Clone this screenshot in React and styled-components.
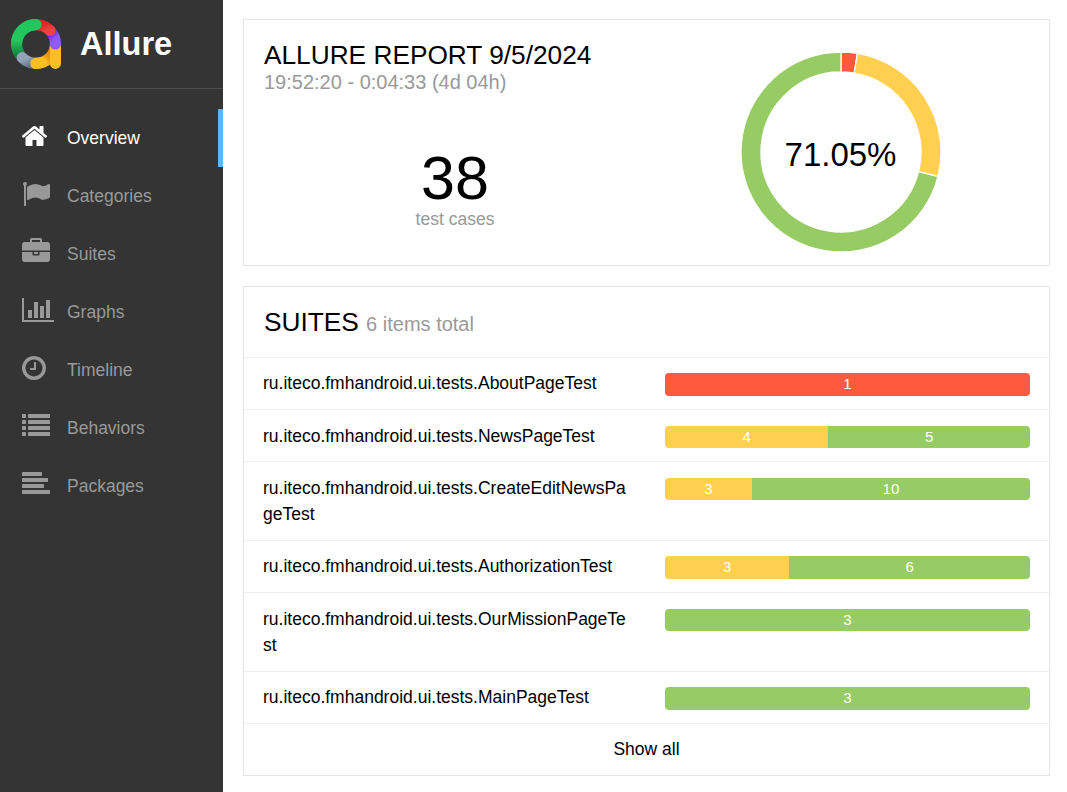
import React from "react";
import styled, { createGlobalStyle } from "styled-components";

const COLORS = { failed: "#fd5a3e", broken: "#ffd050", passed: "#97cc64" };

const GlobalStyle = createGlobalStyle`
  *, *::before, *::after { box-sizing: border-box; }
  body {
    margin: 0;
    background: #fff;
    color: #000;
    font-family: "Liberation Sans", Arial, sans-serif;
    font-size: 17.5px;
    line-height: 26.25px;
    overflow: hidden;
  }
`;

const Page = styled.div`
  display: flex;
  height: 100vh;
`;

const Sidebar = styled.aside`
  flex: 0 0 223px;
  background: #343434;
`;

const Brand = styled.div`
  display: flex;
  align-items: center;
  gap: 19px;
  height: 89px;
  padding-left: 11px;
  border-bottom: 1px solid #4d4d4d;
  color: #fff;
  font-size: 32.5px;
  font-weight: bold;
`;

const Menu = styled.nav`
  display: flex;
  flex-direction: column;
  padding-top: 20px;
`;

const MenuItem = styled.a`
  display: flex;
  align-items: flex-start;
  height: 58px;
  padding-left: 22px;
  color: ${(p) => (p.$active ? "#fff" : "#999")};
  border-right: 5px solid ${(p) => (p.$active ? "#63b3f7" : "transparent")};
`;

const MenuIcon = styled.svg`
  display: block;
  flex: none;
  width: 32px;
  height: 28px;
  margin: 13px 13px 0 0;
  fill: currentColor;
`;

const MenuLabel = styled.span`
  padding-top: 16px;
  font-size: 17.5px;
`;

const Main = styled.main`
  flex: 1;
  display: flex;
  flex-direction: column;
  gap: 20px;
  padding: 19px 17px 0 20px;
`;

const Panel = styled.section`
  border: 1px solid #e5e5e5;
`;

const Summary = styled(Panel)`
  display: flex;
  height: 247px;
`;

const SummaryInfo = styled.div`
  flex: 0 0 422px;
  padding: 21px 0 0 20px;
`;

const Title = styled.h2`
  margin: 0;
  font-size: 26.25px;
  line-height: 29px;
  font-weight: normal;
  text-transform: uppercase;
`;

const Subtitle = styled.span`
  color: #999;
  font-size: 20px;
  text-transform: none;
`;

const Period = styled(Subtitle)`
  display: block;
  line-height: 24px;
`;

const Total = styled.div`
  display: flex;
  flex-direction: column;
  align-items: center;
  width: 382px;
  padding-top: 53px;
`;

const TotalValue = styled.div`
  font-size: 61px;
  line-height: 63px;
`;

const TotalCaption = styled.div`
  color: #999;
  font-size: 17.5px;
  line-height: 18px;
`;

const ChartArea = styled.div`
  flex: 1;
  padding: 31.4px 0 0 74px;
`;

const Suites = styled(Panel)`
  height: 490px;
`;

const SuitesHeader = styled.div`
  height: 69.85px;
  padding: 21px 20px 0;
`;

const Row = styled.div`
  display: flex;
  padding: 12.5px 19px 12.5px 19px;
  border-top: 1px solid #eceeef;
`;

const SuiteName = styled.div`
  flex: 0 0 365px;
  margin-right: 37px;
  word-break: break-all;
`;

const Bar = styled.div`
  display: flex;
  flex: 1;
  height: 22.5px;
  margin-top: 3px;
  border-radius: 4px;
  overflow: hidden;
`;

const BarPart = styled.div`
  flex: ${(p) => p.$value} 1 auto;
  background: ${(p) => COLORS[p.$status]};
  color: #fff;
  font-size: 15px;
  line-height: 22px;
  text-align: center;
`;

const ShowAll = styled(Row)`
  justify-content: center;
`;

const Icon = ({ name }) => {
  const icon = ICONS[name];
  return (
    <MenuIcon viewBox={`${icon.x} 0 2048 1792`}>
      {icon.d ? <path d={icon.d} /> : icon.rects.map(([x, y, w]) => (
        <rect key={`${x}-${y}`} x={x} y={y} width={w} height="256" rx="40" />
      ))}
    </MenuIcon>
  );
};

const ICONS = {
  home: { x: 96, d: "M1472 992v480q0 26-19 45t-45 19h-384v-384h-256v384h-384q-26 0-45-19t-19-45v-480q0-1 .5-3t.5-3l575-474 575 474q1 2 1 6zm223-69l-62 74q-8 9-21 11h-3q-13 0-21-7l-692-577-692 577q-12 8-24 7-13-2-21-11l-62-74q-8-10-7-23.5t11-21.5l719-599q32-26 76-26t76 26l244 204v-195q0-14 9-23t23-9h192q14 0 23 9t9 23v408l219 182q10 8 11 21.5t-7 23.5z" },
  flag: { x: 0, d: "M320 256q0 72-64 110v1266q0 13-9.500 22.500t-22.500 9.500h-64q-13 0-22.500-9.500t-9.500-22.500v-1266q-64-38-64-110 0-53 37.500-90.500t90.500-37.500 90.500 37.500 37.500 90.500zm1472 64v763q0 25-12.500 38.500t-39.500 27.500q-215 116-369 116-61 0-123.500-22t-108.500-48-115.500-48-142.500-22q-192 0-464 146-17 9-33 9-26 0-45-19t-19-45v-742q0-32 31-55 21-14 79-43 236-120 421-120 107 0 200 29t219 88q38 19 88 19 54 0 117.500-21t110-47 88-47 54.500-21q26 0 45 19t19 45z" },
  briefcase: { x: 0, d: "M640 256h512v-128h-512v128zm1152 640v480q0 66-47 113t-113 47h-1472q-66 0-113-47t-47-113v-480h672v160q0 26 19 45t45 19h320q26 0 45-19t19-45v-160h672zm-768 0v128h-256v-128h256zm768-480v384h-1792v-384q0-66 47-113t113-47h352v-160q0-40 28-68t68-28h576q40 0 68 28t28 68v160h352q66 0 113 47t47 113z" },
  chart: { x: 0, d: "M640 896v512h-256v-512h256zm384-512v1024h-256v-1024h256zm1024 1152v128h-2048v-1536h128v1408h1920zm-640-896v768h-256v-768h256zm384-384v1152h-256v-1152h256z" },
  clock: { x: 128, d: "M1024 544v448q0 14-9 23t-23 9h-320q-14 0-23-9t-9-23v-64q0-14 9-23t23-9h224v-352q0-14 9-23t23-9h64q14 0 23 9t9 23zm416 352q0-148-73-273t-198-198-273-73-273 73-198 198-73 273 73 273 198 198 273 73 273-73 198-198 73-273zm224 0q0 209-103 385.500t-279.500 279.500-385.500 103-385.500-103-279.500-279.500-103-385.500 103-385.500 279.500-279.500 385.500-103 385.500 103 279.500 279.500 103 385.500z" },
  list: { x: 0, rects: [128, 512, 896, 1280].flatMap((y) => [[0, y, 256], [384, y, 1408]]) },
  align: { x: 0, rects: [[0, 128, 1280], [0, 512, 1664], [0, 896, 1408], [0, 1280, 1792]] },
};

const MENU = [
  ["Overview", "home"],
  ["Categories", "flag"],
  ["Suites", "briefcase"],
  ["Graphs", "chart"],
  ["Timeline", "clock"],
  ["Behaviors", "list"],
  ["Packages", "align"],
];

const SUITES = [
  ["AboutPageTest", [["failed", 1]]],
  ["NewsPageTest", [["broken", 4], ["passed", 5]]],
  ["CreateEditNewsPageTest", [["broken", 3], ["passed", 10]]],
  ["AuthorizationTest", [["broken", 3], ["passed", 6]]],
  ["OurMissionPageTest", [["passed", 3]]],
  ["MainPageTest", [["passed", 3]]],
];

const Logo = () => (
  <svg width="50" height="50" viewBox="0 0 51 51" fill="none" strokeWidth="11.4" strokeLinecap="round">
    <defs>
      <linearGradient id="green" x1="0" y1="0.2" x2="0" y2="1">
        <stop offset="0.4" stopColor="#22c55e" />
        <stop offset="1" stopColor="#15803d" />
      </linearGradient>
      <linearGradient id="red" x1="0" y1="0" x2="1" y2="1">
        <stop offset="0.2" stopColor="#dc2626" />
        <stop offset="1" stopColor="#ef4444" />
      </linearGradient>
      <linearGradient id="violet" x1="0" y1="0" x2="0.3" y2="1">
        <stop offset="0.2" stopColor="#6d28d9" />
        <stop offset="0.8" stopColor="#8b5cf6" />
      </linearGradient>
      <linearGradient id="grey" x1="0" y1="0" x2="1" y2="1">
        <stop offset="0.2" stopColor="#94a3b8" />
        <stop offset="1" stopColor="#64748b" />
      </linearGradient>
      <linearGradient id="amber" gradientUnits="userSpaceOnUse" x1="28" y1="45" x2="42" y2="33">
        <stop offset="0.2" stopColor="#fbbf24" />
        <stop offset="1" stopColor="#d97706" />
      </linearGradient>
    </defs>
    <path d="M25.300 45.300A19.800 19.800 0 0 0 45.300 25.500" stroke="url(#amber)" />
    <path d="M45.300 28V45.300" stroke="#fbbf24" />
    <path d="M40.500 12.500A19.800 19.800 0 0 1 45.300 25.500" stroke="url(#violet)" />
    <path d="M25.300 5.700A19.800 19.800 0 0 1 39.700 11.700" stroke="url(#red)" />
    <path d="M5.700 25.500A19.800 19.800 0 0 1 25.500 5.700" stroke="#22c55e" />
    <path d="M25.500 5.700A19.800 19.800 0 0 0 9.500 37.200" stroke="url(#green)" strokeLinecap="butt" />
    <path d="M11.400 39.400A19.800 19.800 0 0 0 25.300 45.300" stroke="url(#grey)" />
    <path d="M25.300 45.300A19.800 19.800 0 0 0 31 44.400" stroke="#fbbf24" />
  </svg>
);

const polar = (r, a) => `${100 + r * Math.sin(a)} ${100 - r * Math.cos(a)}`;

const slice = (from, to) => {
  const a = (from / 38) * 2 * Math.PI;
  const b = (to / 38) * 2 * Math.PI;
  const large = b - a > Math.PI ? 1 : 0;
  return `M${polar(100, a)}A100 100 0 ${large} 1 ${polar(100, b)}L${polar(80, b)}A80 80 0 ${large} 0 ${polar(80, a)}Z`;
};

const Donut = () => (
  <svg width="202" height="202" viewBox="-1 -1 202 202" stroke="#fff" strokeWidth="1.3">
    <path d={slice(0, 1)} fill={COLORS.failed} />
    <path d={slice(1, 11)} fill={COLORS.broken} />
    <path d={slice(11, 38)} fill={COLORS.passed} />
    <text x="99.500" y="113.600" textAnchor="middle" fontSize="33" fill="#000" stroke="none">71.05%</text>
  </svg>
);

export default function App() {
  return (
    <Page>
      <GlobalStyle />
      <Sidebar>
        <Brand>
          <Logo />
          <span>Allure</span>
        </Brand>
        <Menu>
          {MENU.map(([label, icon], i) => (
            <MenuItem key={label} $active={i === 0}>
              <Icon name={icon} />
              <MenuLabel>{label}</MenuLabel>
            </MenuItem>
          ))}
        </Menu>
      </Sidebar>
      <Main>
        <Summary>
          <SummaryInfo>
            <Title>Allure Report 9/5/2024</Title>
            <Period>19:52:20 - 0:04:33 (4d 04h)</Period>
            <Total>
              <TotalValue>38</TotalValue>
              <TotalCaption>test cases</TotalCaption>
            </Total>
          </SummaryInfo>
          <ChartArea>
            <Donut />
          </ChartArea>
        </Summary>
        <Suites>
          <SuitesHeader>
            <Title>
              Suites <Subtitle>6 items total</Subtitle>
            </Title>
          </SuitesHeader>
          {SUITES.map(([name, parts]) => (
            <Row key={name}>
              <SuiteName>{`ru.iteco.fmhandroid.ui.tests.${name}`}</SuiteName>
              <Bar>
                {parts.map(([status, value]) => (
                  <BarPart key={status} $status={status} $value={value}>{value}</BarPart>
                ))}
              </Bar>
            </Row>
          ))}
          <ShowAll as="a">Show all</ShowAll>
        </Suites>
      </Main>
    </Page>
  );
}
